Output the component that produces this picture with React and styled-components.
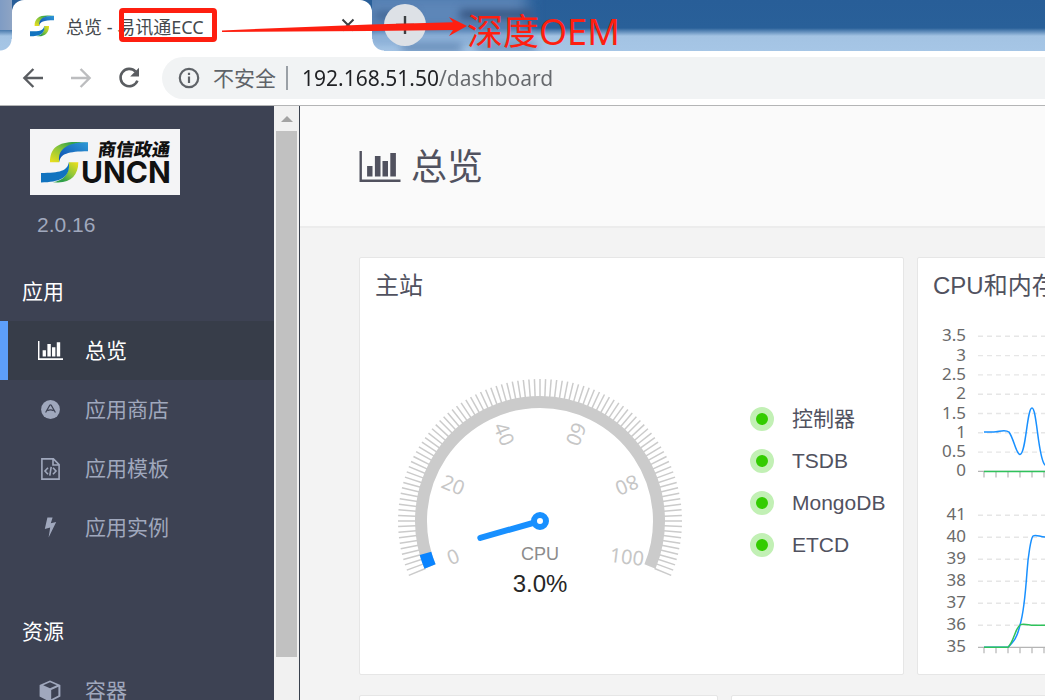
import React from "react";
import styled, { createGlobalStyle } from "styled-components";

const UI_FONT = '"Liberation Sans", "Noto Sans CJK SC", sans-serif';
const CHROME_FONT = '"Noto Sans", "Noto Sans CJK SC", sans-serif';
const RED = "#fe1f10";

const GlobalStyle = createGlobalStyle`
  * { box-sizing: border-box; }
  body { margin: 0; font-family: ${UI_FONT}; color: #51525f; background: #f3f3f3; }
  ul { list-style: none; margin: 0; padding: 0; }
  h1, h2, h3, p { margin: 0; font-weight: 400; }
  button { border: 0; padding: 0; background: none; font: inherit; }
  svg { display: block; }
`;

const Window = styled.div`
  display: flex;
  flex-direction: column;
  height: 100vh;
  overflow: hidden;
`;

/* ---------- browser chrome ---------- */

const TabStrip = styled.div`
  position: relative;
  display: flex;
  flex: none;
  height: 51px;
  padding-left: 12px;
  background:
    linear-gradient(to right, #7f9cc4 0, #8ea4c4 12px, transparent 12px) 0 0 / 12px 30px no-repeat,
    linear-gradient(to bottom, #285e98 0, #296099 28px, #a3c3e3 36px, #a6c6e6 51px);
`;

const Smudges = styled.div`
  position: absolute;
  top: 0;
  left: 372px;
  width: 190px;
  height: 51px;
  overflow: hidden;
`;

const Smudge = styled.span`
  position: absolute;
  left: ${(p) => p.$x}px;
  top: ${(p) => p.$y}px;
  width: ${(p) => p.$w}px;
  height: ${(p) => p.$h}px;
  background: ${(p) => p.$c};
  filter: blur(${(p) => p.$blur || 4}px);
`;

const Tab = styled.div`
  position: relative;
  display: flex;
  align-items: center;
  width: 360px;
  padding: 0 17px 0 18px;
  border-radius: 12px 12px 0 0;
  background: #fff;
  font-family: ${CHROME_FONT};
  font-size: 18px;
  color: #45494d;
  &::before,
  &::after {
    content: "";
    position: absolute;
    bottom: 0;
    width: 12px;
    height: 12px;
  }
  &::before {
    left: -12px;
    background: radial-gradient(circle at 0 0, transparent 11px, #fff 12px);
  }
  &::after {
    right: -12px;
    background: radial-gradient(circle at 100% 0, transparent 11px, #fff 12px);
  }
`;

const TabTitle = styled.span`
  flex: 1;
  margin-left: 12px;
  white-space: pre;
`;

const TabClose = styled.button`
  width: 14px;
  height: 14px;
  margin-bottom: 2px;
  color: #3c4043;
`;

const NewTab = styled.button`
  position: relative;
  display: grid;
  place-items: center;
  width: 42px;
  height: 42px;
  margin: 4px 0 0 12px;
  border-radius: 50%;
  background: #dde1e6;
  color: #3c4043;
`;

const Annotation = styled.div`
  position: absolute;
  inset: 0;
  z-index: 2;
  pointer-events: none;
`;

const MarkBox = styled.div`
  position: absolute;
  left: 119px;
  top: 8px;
  width: 98px;
  height: 34px;
  border: 5px solid ${RED};
  border-radius: 4px;
`;

const MarkArrow = styled.svg`
  position: absolute;
  left: 220px;
  top: 14px;
`;

const MarkText = styled.span`
  position: absolute;
  left: 467px;
  top: 9px;
  font-family: ${CHROME_FONT};
  font-size: 36px;
  line-height: 46px;
  color: ${RED};
  white-space: nowrap;
`;

const Toolbar = styled.div`
  display: flex;
  flex: none;
  align-items: center;
  height: 55px;
  padding-left: 21px;
  background: #fff;
  border-bottom: 1px solid #b4b5b6;
`;

const ToolButton = styled.button`
  width: 24px;
  height: 24px;
  margin-right: 24px;
  color: ${(p) => (p.$muted ? "#bcbdbf" : "#5a5d61")};
`;

const AddressBar = styled.div`
  display: flex;
  flex: 1;
  align-items: center;
  min-width: 0;
  height: 42px;
  margin-left: -3px;
  padding-left: 16px;
  border-radius: 21px 0 0 21px;
  background: #f1f3f4;
  font-family: ${CHROME_FONT};
  font-size: 21px;
  color: #5f6368;
`;

const Insecure = styled.label`
  margin: 0 10px 0 13px;
  line-height: 28px;
  white-space: nowrap;
`;

const Divider = styled.span`
  width: 2px;
  height: 24px;
  margin-right: 14px;
  background: #9aa0a6;
`;

const UrlInput = styled.input`
  flex: 1;
  min-width: 0;
  height: 30px;
  padding: 0;
  border: 0;
  outline: 0;
  font: inherit;
  color: transparent;
  background: linear-gradient(to right, #202124 138px, #66696d 138px);
  -webkit-background-clip: text;
  background-clip: text;
`;

/* ---------- application ---------- */

const Body = styled.div`
  display: flex;
  flex: 1;
  min-height: 0;
`;

const Sidebar = styled.aside`
  flex: none;
  width: 274px;
  overflow: hidden;
  background: #3d4253;
`;

const Brand = styled.div`
  padding: 23px 30px;
`;

const Version = styled.p`
  margin-top: 16px;
  padding-left: 7px;
  font-size: 21px;
  line-height: 28px;
  color: #a0a8bd;
`;

const NavGroup = styled.nav`
  margin-bottom: 45px;
`;

const NavTitle = styled.h3`
  padding-left: 22px;
  font-size: 21px;
  line-height: 59px;
  color: #fff;
`;

const NavLink = styled.a`
  display: flex;
  align-items: center;
  height: 59px;
  border-left: 8px solid ${(p) => (p.$active ? "#5d9ffa" : "transparent")};
  background: ${(p) => (p.$active ? "#373d49" : "transparent")};
  color: ${(p) => (p.$active ? "#fff" : "#a0a8bd")};
  font-size: 21px;
  line-height: 28px;
  text-decoration: none;
`;

const NavIcon = styled.span`
  display: flex;
  justify-content: center;
  width: 30px;
  margin: 0 20px 0 27px;
`;

const ScrollTrack = styled.div`
  display: flex;
  flex-direction: column;
  flex: none;
  width: 26px;
  padding: 0 2px;
  background: #f1f1f1;
  border-right: 1px solid #3a414d;
  &::after {
    content: "";
    flex: 43;
  }
`;

const ScrollArrow = styled.button`
  display: grid;
  place-items: center;
  height: 25px;
  color: #a3a3a3;
`;

const ScrollThumb = styled.div`
  flex: 526;
  background: #c1c1c1;
`;

const Main = styled.main`
  flex: 1;
  min-width: 0;
  overflow: hidden;
`;

const PageHeader = styled.header`
  display: flex;
  align-items: center;
  gap: 10px;
  height: 122px;
  padding: 0 59px;
  background: #fafafa;
  border-bottom: 2px solid #ececec;
`;

const PageTitle = styled.h1`
  padding-top: 4px;
  font-size: 36px;
  line-height: 48px;
`;

const Content = styled.div`
  display: grid;
  gap: 20px;
  min-width: 1221px;
  padding: 29px 59px;
`;

const CardRow = styled.div`
  display: grid;
  grid-template-columns: repeat(${(p) => p.$columns}, 1fr);
  gap: 13px;
`;

const Card = styled.section`
  min-height: 418px;
  padding: 0 15px;
  background: #fff;
  border: 1px solid #e6e6e6;
  border-radius: 2px;
`;

const CardTitle = styled.h2`
  padding-bottom: 2px;
  font-size: 24px;
  line-height: 56px;
`;

const StationBody = styled.div`
  display: flex;
  align-items: center;
  gap: 65px;
  padding: 55px 0 0 20px;
`;

const GaugeSvg = styled.svg`
  flex: none;
  overflow: visible;
`;

const Service = styled.li`
  display: flex;
  align-items: center;
  gap: 18px;
  height: 42px;
  font-size: 21px;
  line-height: 28px;
  white-space: nowrap;
`;

const StatusDot = styled.span`
  width: 24px;
  height: 24px;
  border: 6px solid #c2f0b5;
  border-radius: 50%;
  background: #33cc00;
`;

const ChartSvg = styled.svg`
  width: 100%;
  height: auto;
`;

/* ---------- drawings ---------- */

function SwooshPaths({ id }) {
  return (
    <>
      <defs>
        <linearGradient id={`${id}g1`} x1="0" y1="1" x2="1" y2="0">
          <stop offset="0" stopColor="#f0e01c" />
          <stop offset="0.45" stopColor="#8cc63a" />
          <stop offset="0.75" stopColor="#35a447" />
        </linearGradient>
        <linearGradient id={`${id}b1`} x1="0" y1="1" x2="1" y2="0">
          <stop offset="0" stopColor="#0a4bb0" />
          <stop offset="1" stopColor="#2f9ad6" />
        </linearGradient>
        <linearGradient id={`${id}g2`} x1="1" y1="0" x2="0" y2="1">
          <stop offset="0" stopColor="#f0e01c" />
          <stop offset="0.45" stopColor="#8cc63a" />
          <stop offset="0.75" stopColor="#2f9f4a" />
        </linearGradient>
      </defs>
      <path d="M44 13C27 13 19 19 19 33.3H28.3C28 21 37 14 57 13.3Z" fill={`url(#${id}g1)`} />
      <path d="M57 13.3C38 13.3 26 19 28.3 33.3C29 25 37 22.3 57 22.3Z" fill={`url(#${id}b1)`} />
      <path d="M26 53.5C40 54 47.3 46 47.3 33.3H37.8C39 46 31 52 22 53.3Z" fill={`url(#${id}g2)`} />
      <path d="M10 53.4C28 53.4 40 49 37.8 33.3C36.5 42 29 44 10 44Z" fill="#1173bf" />
    </>
  );
}

function Logo() {
  return (
    <svg width="150" height="66" viewBox="0 0 150 66" role="img" aria-label="SUNCN">
      <rect width="150" height="66" fill="#f4f4f6" />
      <g transform="translate(1 0)">
        <SwooshPaths id="logo" />
      </g>
      <g transform="skewX(-8)">
        <text x="71" y="27" fontFamily="Noto Sans CJK SC" fontWeight="900" fontSize="18" fill="#111">商信政通</text>
      </g>
      <text x="51" y="54" fontFamily="Inter, sans-serif" fontWeight="700" fontSize="30" fill="#111">UNCN</text>
    </svg>
  );
}

function BarChartIcon({ width, height }) {
  return (
    <svg width={width} height={height} viewBox="0 0 41 31" fill="currentColor" aria-hidden="true">
      <path d="M0 0H2.4V28.4H41V31H0Z" />
      <path d="M7.6 15H13V25.4H7.6ZM15.4 5H21V25.4H15.4ZM23 10H28.5V25.4H23ZM30.8 2H36.4V25.4H30.8Z" />
    </svg>
  );
}

const StoreIcon = () => (
  <svg width="19" height="19" viewBox="0 0 19 19" aria-hidden="true">
    <circle cx="9.5" cy="9.5" r="9.4" fill="currentColor" />
    <path d="M4.6 12.5 8.8 5.2Q9.5 4.4 10.2 5.2L14.4 12.5M6.4 10.6Q9.5 9 12.6 10.6" fill="none" stroke="#3d4253" strokeWidth="1.2" />
  </svg>
);

const TemplateIcon = () => (
  <svg width="19" height="22" viewBox="0 0 19 22" fill="none" stroke="currentColor" strokeWidth="1.6" aria-hidden="true">
    <path d="M0.9 0.9H12.4L18.1 6.6V21.1H0.9ZM12 1V7H18" />
    <path d="M7 9.8 4 13 7 16.2M12 9.8 15 13 12 16.2M10.2 8.8 8.8 17.6" />
  </svg>
);

const BoltIcon = () => (
  <svg width="13" height="21" viewBox="0 0 13 21" fill="currentColor" aria-hidden="true">
    <path d="M3.4 0.6H8.6L6.8 6.2 12.2 5 4.6 20.4 6.2 10.6 0.8 12Z" />
  </svg>
);

const CubeIcon = () => (
  <svg width="22" height="22" viewBox="0 0 22 22" fill="currentColor" aria-hidden="true">
    <path d="M11 0.4 21.4 5V16.6L11 21.8 0.6 16.6V5ZM11 2.2 4.2 5.2 11 8.2 17.8 5.2ZM12.2 10V19.2L19.4 15.6V6.8Z" fillRule="evenodd" />
  </svg>
);

const polar = (r, degrees) => {
  const a = (degrees * Math.PI) / 180;
  return [r * Math.cos(a), -r * Math.sin(a)];
};

const GAUGE_START = 202.5;
const GAUGE_SWEEP = 225;
const angleOf = (value) => GAUGE_START - (value / 100) * GAUGE_SWEEP;

function arc(r, from, to) {
  const [x1, y1] = polar(r, angleOf(from));
  const [x2, y2] = polar(r, angleOf(to));
  const large = ((to - from) / 100) * GAUGE_SWEEP > 180 ? 1 : 0;
  return `M${x1} ${y1}A${r} ${r} 0 ${large} 1 ${x2} ${y2}`;
}

const gaugeLabels = [
  { value: 0, turn: -22 },
  { value: 20, turn: 22 },
  { value: 40, turn: 67 },
  { value: 60, turn: 112 },
  { value: 80, turn: 157 },
  { value: 100, turn: 7 },
];

function Gauge({ value }) {
  const [nx, ny] = polar(62, angleOf(value));
  return (
    <GaugeSvg width="290" height="222" viewBox="-145 -150 290 222" role="img" aria-label="CPU 3.0%">
      {Array.from({ length: 101 }, (_, i) => {
        const [x1, y1] = polar(124, angleOf(i));
        const [x2, y2] = polar(142, angleOf(i));
        return <line key={i} x1={x1} y1={y1} x2={x2} y2={y2} stroke="#cbcbcb" strokeWidth="1.5" />;
      })}
      <path d={arc(119, 0, 100)} fill="none" stroke="#cbcbcb" strokeWidth="12" />
      <path d={arc(119, 0, value)} fill="none" stroke="#0a84ff" strokeWidth="12" />
      {gaugeLabels.map(({ value: v, turn }) => {
        const [x, y] = polar(94, angleOf(v));
        return (
          <g key={v} transform={`translate(${x} ${y}) rotate(${turn})`}>
            <text y="7" textAnchor="middle" fontFamily="Noto Sans" fontSize="20" fill="#c6c6c6">{v}</text>
          </g>
        );
      })}
      <line x1="0" y1="0" x2={nx} y2={ny} stroke="#1890ff" strokeWidth="6" strokeLinecap="round" />
      <circle r="6" fill="#fff" stroke="#1890ff" strokeWidth="6" />
      <text y="39" textAnchor="middle" fontSize="18" fill="#8c8c8c">CPU</text>
      <text y="71" textAnchor="middle" fontSize="24" fill="#262626">3.0%</text>
    </GaugeSvg>
  );
}

const TICKS = Array.from({ length: 38 }, (_, i) => 51 + i * 12);

function Plot({ labels, top, step }) {
  const base = top + step * (labels.length - 1);
  return (
    <g>
      {labels.map((label, i) => (
        <React.Fragment key={label}>
          <text x="33" y={top + step * i + 5} textAnchor="end" fontFamily="Noto Sans" fontSize="17" fill="#6a6a6a">{label}</text>
          {i < labels.length - 1 && (
            <line x1="45" x2="513" y1={top + step * i} y2={top + step * i} stroke="#e6e6e6" strokeWidth="1.4" strokeDasharray="5 4" />
          )}
        </React.Fragment>
      ))}
      <path d={`M45 ${base}H513` + TICKS.map((x) => `M${x} ${base}v6`).join("")} stroke="#b5b5b5" strokeWidth="1.2" fill="none" />
    </g>
  );
}

function UsageCharts() {
  return (
    <ChartSvg viewBox="0 0 513 345" role="img" aria-label="CPU和内存">
      <Plot labels={["3.5", "3", "2.5", "2", "1.5", "1", "0.5", "0"]} top={20.3} step={19.3} />
      <g fill="none" strokeWidth="1.5">
        <path stroke="#1890ff" d="M51 116C55 116 59 116 63 115.7C67 115.4 72 113 76 116C81 123 83 138 87 138.5C93 138 94 92 99 92C104 92 105 143 112 149C118 153 120 116 127 116H500" />
        <path stroke="#2fc25b" d="M51 155.4H500" />
      </g>
      <Plot labels={["41", "40", "39", "38", "37", "36", "35"]} top={199.3} step={22} />
      <g fill="none" strokeWidth="1.5">
        <path stroke="#1890ff" d="M51 331.3H75C81 325 84 322 87 309C91 296 93 270 94 256C95 240 98 222 100 220C103 218 107 221 112 221H500" />
        <path stroke="#2fc25b" d="M51 331.3H75C81 325 82 313 87 309C90 307 96 309.3 101 309.3H500" />
      </g>
    </ChartSvg>
  );
}

/* ---------- page ---------- */

const navGroups = [
  {
    title: "应用",
    items: [
      { label: "总览", icon: <BarChartIcon width={25} height={19} />, active: true },
      { label: "应用商店", icon: <StoreIcon /> },
      { label: "应用模板", icon: <TemplateIcon /> },
      { label: "应用实例", icon: <BoltIcon /> },
    ],
  },
  { title: "资源", items: [{ label: "容器", icon: <CubeIcon /> }] },
];

const services = ["控制器", "TSDB", "MongoDB", "ETCD"];

const smudges = [
  { $x: -10, $y: -8, $w: 165, $h: 42, $c: "#5d86b8", $blur: 8 },
  { $x: 0, $y: 34, $w: 160, $h: 10, $c: "#8bb0d8" },
  { $x: 4, $y: 12, $w: 40, $h: 7, $c: "#3d5f8c" },
  { $x: 88, $y: 10, $w: 72, $h: 9, $c: "#34527e" },
  { $x: 30, $y: 44, $w: 60, $h: 7, $c: "#587fae" },
  { $x: 104, $y: 44, $w: 60, $h: 7, $c: "#6289b5" },
];

export default function App() {
  return (
    <Window>
      <GlobalStyle />
      <TabStrip>
        <Smudges>
          {smudges.map((s, i) => (
            <Smudge key={i} {...s} />
          ))}
        </Smudges>
        <Tab>
          <svg width="24" height="22" viewBox="10 12 47 43" aria-hidden="true">
            <SwooshPaths id="fav" />
          </svg>
          <TabTitle>总览 - 易讯通ECC</TabTitle>
          <TabClose aria-label="关闭">
            <svg width="14" height="14" viewBox="0 0 14 14" fill="none" stroke="currentColor" strokeWidth="2">
              <path d="M1.5 1.5 12.5 12.5M12.5 1.5 1.5 12.5" />
            </svg>
          </TabClose>
        </Tab>
        <NewTab aria-label="新标签页">
          <svg width="18" height="18" viewBox="0 0 18 18" stroke="currentColor" strokeWidth="2.4">
            <path d="M9 0V18M0 9H18" />
          </svg>
        </NewTab>
        <Annotation>
          <MarkBox />
          <MarkArrow width="248" height="24" viewBox="0 0 248 24" fill={RED}>
            <path d="M2 16.4 150 10.4 233 8.2 229 3 247 12 229 22 233 16 150 17 2 18Z" />
          </MarkArrow>
          <MarkText>深度OEM</MarkText>
        </Annotation>
      </TabStrip>

      <Toolbar>
        <ToolButton aria-label="后退">
          <svg width="24" height="24" viewBox="0 0 24 24" fill="none" stroke="currentColor" strokeWidth="2.4">
            <path d="M22 12H4M12.4 3 3.4 12 12.4 21" />
          </svg>
        </ToolButton>
        <ToolButton $muted aria-label="前进">
          <svg width="24" height="24" viewBox="0 0 24 24" fill="none" stroke="currentColor" strokeWidth="2.4">
            <path d="M2 12H20M11.6 3 20.6 12 11.6 21" />
          </svg>
        </ToolButton>
        <ToolButton aria-label="重新加载">
          <svg width="24" height="24" viewBox="0 0 24 24" fill="none" stroke="currentColor" strokeWidth="2.6">
            <path d="M18.6 5.6A8.7 8.7 0 1 0 20.4 14.6" />
            <path d="M22 1.8V10.6H13.2Z" fill="currentColor" stroke="none" />
          </svg>
        </ToolButton>
        <AddressBar>
          <svg width="22" height="22" viewBox="0 0 22 22" fill="none" stroke="currentColor" strokeWidth="2.2" aria-hidden="true">
            <circle cx="11" cy="11" r="9.2" />
            <path d="M11 9.6V16M11 5.8V8" />
          </svg>
          <Insecure htmlFor="url">不安全</Insecure>
          <Divider />
          <UrlInput id="url" defaultValue="192.168.51.50/dashboard" spellCheck={false} />
        </AddressBar>
      </Toolbar>

      <Body>
        <Sidebar>
          <Brand>
            <Logo />
            <Version>2.0.16</Version>
          </Brand>
          {navGroups.map((group) => (
            <NavGroup key={group.title} aria-label={group.title}>
              <NavTitle>{group.title}</NavTitle>
              <ul>
                {group.items.map((item) => (
                  <li key={item.label}>
                    <NavLink href="#" $active={item.active}>
                      <NavIcon>{item.icon}</NavIcon>
                      {item.label}
                    </NavLink>
                  </li>
                ))}
              </ul>
            </NavGroup>
          ))}
        </Sidebar>
        <ScrollTrack>
          <ScrollArrow aria-label="向上滚动">
            <svg width="12" height="6" viewBox="0 0 12 6" fill="currentColor">
              <path d="M6 0 12 6H0Z" />
            </svg>
          </ScrollArrow>
          <ScrollThumb />
        </ScrollTrack>

        <Main>
          <PageHeader>
            <BarChartIcon width={42} height={31} />
            <PageTitle>总览</PageTitle>
          </PageHeader>
          <Content>
            <CardRow $columns={2}>
              <Card>
                <CardTitle>主站</CardTitle>
                <StationBody>
                  <Gauge value={3} />
                  <ul>
                    {services.map((name) => (
                      <Service key={name}>
                        <StatusDot />
                        {name}
                      </Service>
                    ))}
                  </ul>
                </StationBody>
              </Card>
              <Card>
                <CardTitle>CPU和内存</CardTitle>
                <UsageCharts />
              </Card>
            </CardRow>
            <CardRow $columns={3}>
              <Card />
              <Card />
              <Card />
            </CardRow>
          </Content>
        </Main>
      </Body>
    </Window>
  );
}
